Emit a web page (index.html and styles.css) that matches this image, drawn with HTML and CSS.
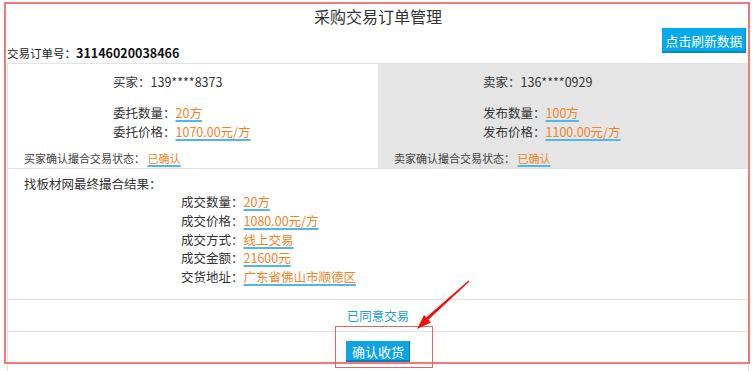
FILE: index.html
```html
<!DOCTYPE html>
<html lang="zh-CN">
<head>
    <meta charset="UTF-8">
    <title>采购交易订单管理</title>
    <link rel="stylesheet" href="styles.css">
</head>
<body>

    <div class="sheet">
        <h1 class="title">采购交易订单管理</h1>

        <div class="toolbar">
            <div class="order-no">交易订单号：<strong>31146020038466</strong></div>
            <button class="btn btn-refresh">点击刷新数据</button>
        </div>

        <div class="deal">
            <div class="parties">
                <div class="party">
                    <div class="party-main">
                        <div class="who">买家：139****8373</div>
                        <div class="terms">
                            <div>委托数量：<span class="val">20方</span></div>
                            <div>委托价格：<span class="val">1070.00元/方</span></div>
                        </div>
                    </div>
                    <div class="state">买家确认撮合交易状态： <span class="val">已确认</span></div>
                </div>
                <div class="party party-seller">
                    <div class="party-main">
                        <div class="who">卖家：136****0929</div>
                        <div class="terms">
                            <div>发布数量：<span class="val">100方</span></div>
                            <div>发布价格：<span class="val">1100.00元/方</span></div>
                        </div>
                    </div>
                    <div class="state">卖家确认撮合交易状态： <span class="val">已确认</span></div>
                </div>
            </div>

            <div class="result">
                <div class="result-head">找板材网最终撮合结果：</div>
                <div class="result-list">
                    <div>成交数量：<span class="val">20方</span></div>
                    <div>成交价格：<span class="val">1080.00元/方</span></div>
                    <div>成交方式：<span class="val">线上交易</span></div>
                    <div>成交金额：<span class="val">21600元</span></div>
                    <div>交货地址：<span class="val">广东省佛山市顺德区</span></div>
                </div>
            </div>

            <div class="agreed">已同意交易</div>

            <div class="actions">
                <button class="btn btn-confirm">确认收货</button>
            </div>
        </div>
    </div>

    <!-- annotations drawn over the screenshot -->
    <div class="mark mark-page"></div>
    <div class="mark mark-button"></div>
    <svg class="arrow" width="756" height="371" viewBox="0 0 756 371">
        <polygon points="469.5,281.5 424.6,323.2 422.4,320.8 468.5,280.5" fill="#f01010"/>
        <polygon points="417,329 431,322.5 424,315" fill="#f01010"/>
    </svg>

</body>
</html>
```

FILE: styles.css
```css
body {
    margin: 0;
    font-family: "Noto Sans CJK TC", "Noto Sans CJK SC", sans-serif;
    color: #333;
    background-color: #fff;
    position: relative;
    overflow: hidden;
}

.sheet {
    padding: 0 7px;
}

.title {
    margin: 0;
    padding-top: 5px;
    font-size: 16px;
    line-height: 22px;
    font-weight: normal;
    text-align: center;
    color: #333;
}

.toolbar {
    display: flex;
    justify-content: space-between;
    height: 36px;
}

.order-no {
    align-self: flex-end;
    margin-bottom: 1px;
    font-size: 11.5px;
    line-height: 18px;
    color: #222;
}

.order-no strong {
    font-size: 12.5px;
    color: #111;
}

.btn {
    font-family: inherit;
    color: #fff;
    border: none;
    cursor: pointer;
    padding: 0;
}

.btn-refresh {
    align-self: flex-start;
    margin: 1px 3px 0 0;
    width: 84px;
    height: 25px;
    font-size: 12.8px;
    background-color: #05a9ec;
    box-shadow: inset -1px -2px 0 #0789c2;
}

.deal {
    border: 1px solid #e2e2e2;
    font-size: 12.5px;
}

.parties {
    display: flex;
    border-bottom: 1px solid #e2e2e2;
}

.party {
    flex: 1;
    padding: 9px 0 2px 16px;
}

.party-seller {
    background-color: #e5e5e5;
}

.party-main {
    margin-left: 89px;
}

.who {
    line-height: 18px;
}

.terms {
    margin-top: 13px;
    line-height: 18.5px;
}

.state {
    margin-top: 9px;
    font-size: 11px;
    line-height: 16px;
    color: #444;
}

.val {
    color: #f5821f;
    text-decoration: underline;
    text-decoration-color: #4db9ea;
    text-decoration-thickness: 2px;
    text-underline-offset: 2px;
    text-decoration-skip-ink: none;
}

.result {
    padding: 5px 0 12px 16px;
    border-bottom: 1px solid #e2e2e2;
}

.result-head {
    line-height: 19px;
}

.result-list {
    margin-left: 157px;
    line-height: 18.8px;
}

.agreed {
    padding-top: 1px;
    line-height: 30px;
    text-align: center;
    color: #1d9fd9;
    border-bottom: 1px solid #e2e2e2;
}

.actions {
    padding: 9px 0 20px;
    text-align: center;
}

.btn-confirm {
    width: 64px;
    height: 21px;
    font-size: 13px;
    background-color: #0fa3e2;
    box-shadow: inset -1px -2px 0 #0a80b6;
}

.mark {
    position: absolute;
    pointer-events: none;
}

.mark-page {
    left: 4px;
    top: 2px;
    width: 742px;
    height: 358px;
    border: 2px solid #f47878;
}

.mark-button {
    left: 335px;
    top: 326px;
    width: 96px;
    height: 40px;
    border: 1px solid #ea6464;
}

.arrow {
    position: absolute;
    left: 0;
    top: 0;
    pointer-events: none;
}
```
